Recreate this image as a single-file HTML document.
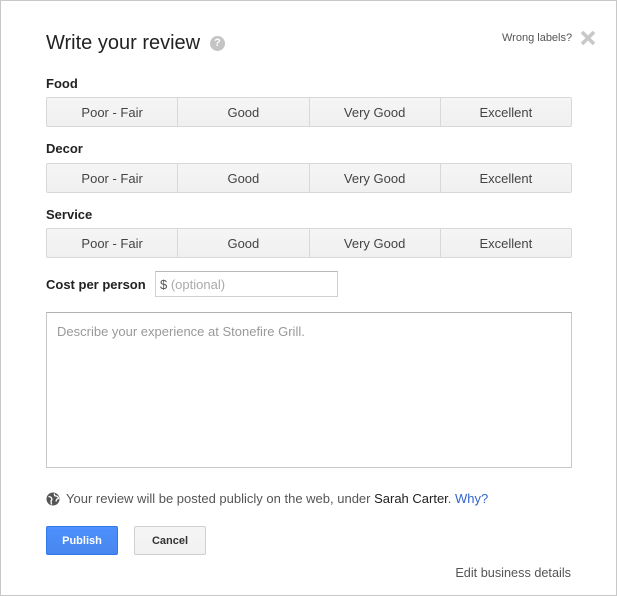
<!DOCTYPE html>
<html><head><style>
body{margin:0;width:617px;height:596px;background:#fff;font-family:"Liberation Sans",Arial,sans-serif;position:relative;overflow:hidden}
.frame{position:absolute;left:0;top:0;width:615px;height:594px;border:1px solid #c8c8c8}
.a{position:absolute}
h1{position:absolute;left:46px;top:32px;margin:0;font-weight:normal;font-size:20px;color:#222}
.lbl{position:absolute;left:46px;font-size:13px;font-weight:bold;color:#222}
.row{position:absolute;left:46px;width:524px;height:28px;border:1px solid #d8d8d8;border-radius:2px;display:flex;background:linear-gradient(#f5f5f5,#f0f0f0)}
.row div{flex:1;text-align:center;line-height:29px;font-size:13px;color:#444;border-left:1px solid #d8d8d8}
.row div:first-child{border-left:none}
</style></head><body>
<div class="frame"></div>
<h1>Write your review</h1>
<div class="a" style="left:210px;top:36px;width:15px;height:15px;border-radius:50%;background:#c4c4c4;color:#fff;font-size:11px;font-weight:bold;text-align:center;line-height:15px">?</div>
<div class="a" style="left:502px;top:32px;font-size:11px;color:#555">Wrong labels?</div>
<svg class="a" style="left:580px;top:30px" width="16" height="16"><path d="M2 2L14 14M14 2L2 14" stroke="#c8c8c8" stroke-width="3.5"/></svg>
<div class="lbl" style="top:76px">Food</div>
<div class="row" style="top:97px"><div>Poor - Fair</div><div>Good</div><div>Very Good</div><div>Excellent</div></div>
<div class="lbl" style="top:141px">Decor</div>
<div class="row" style="top:163px"><div>Poor - Fair</div><div>Good</div><div>Very Good</div><div>Excellent</div></div>
<div class="lbl" style="top:207px">Service</div>
<div class="row" style="top:228px"><div>Poor - Fair</div><div>Good</div><div>Very Good</div><div>Excellent</div></div>
<div class="lbl" style="top:277px">Cost per person</div>
<div class="a" style="left:155px;top:271px;width:181px;height:24px;border:1px solid #d0d0d0;border-top-color:#b8b8b8;font-size:13px;line-height:26px;color:#aaa;text-indent:4px"><span style="color:#555">$</span> (optional)</div>
<div class="a" style="left:46px;top:312px;width:524px;height:154px;border:1px solid #c8c8c8;border-top-color:#b0b0b0"></div>
<div class="a" style="left:57px;top:324px;font-size:13px;color:#999">Describe your experience at Stonefire Grill.</div>
<svg class="a" style="left:46px;top:492px" width="14" height="14"><circle cx="7" cy="7" r="6.5" fill="#555"/><path d="M2.5 4.5q2 0 3 1.5t-.5 3l.5 3.5M8.5 1.5q-.5 2.5 1.5 2.5t2.5 2.5q-2 0-2.5 3" stroke="#fff" stroke-width="1.3" fill="none"/></svg>
<div class="a" style="left:66px;top:491px;font-size:13px;color:#555">Your review will be posted publicly on the web, under <span style="color:#222">Sarah Carter</span>. <span style="color:#3366cc">Why?</span></div>
<div class="a" style="left:46px;top:526px;width:70px;height:27px;border:1px solid #3079ed;border-radius:2px;background:linear-gradient(#4d90fe,#4787ed);color:#fff;font-size:11px;font-weight:bold;text-align:center;line-height:29px">Publish</div>
<div class="a" style="left:134px;top:526px;width:70px;height:27px;border:1px solid #d0d0d0;border-radius:2px;background:linear-gradient(#f5f5f5,#f1f1f1);color:#333;font-size:11px;font-weight:bold;text-align:center;line-height:29px">Cancel</div>
<div class="a" style="right:46px;top:566px;font-size:12.7px;color:#555">Edit business details</div>
</body></html>
